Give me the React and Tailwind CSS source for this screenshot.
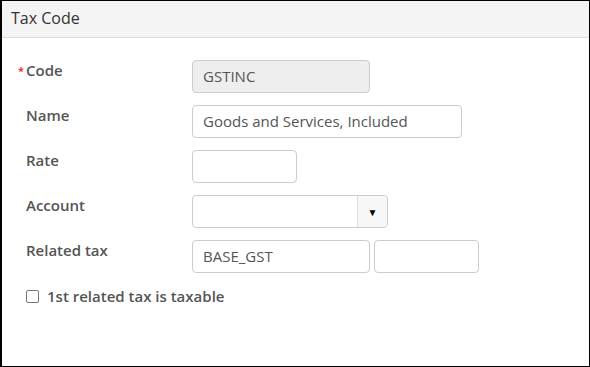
const fields = [
  { label: "Code", required: true },
  { label: "Name" },
  { label: "Rate" },
  { label: "Account" },
  { label: "Related tax" },
];

function TextBox({ value, className = "", disabled }) {
  return (
    <div
      className={`h-[33px] rounded-[4px] border border-[#cccccc] flex items-center px-[10px] text-[15px] text-[#555555] ${
        disabled ? "bg-[#eeeeee]" : "bg-white"
      } ${className}`}
    >
      {value}
    </div>
  );
}

export default function App() {
  return (
    <div
      className="w-[590px] h-[367px] bg-white border border-l-2 border-black flex flex-col"
      style={{ fontFamily: '"Open Sans", sans-serif' }}
    >
      {/* header */}
      <div className="h-[37px] bg-[#f4f4f4] border-b border-[#dddddd] flex items-center pl-[9px] pb-[3px] text-[16px] text-[#333333] shrink-0">
        Tax Code
      </div>

      {/* form */}
      <div className="flex flex-col pt-[22px] pl-[24px]">
        {fields.map((f, i) => (
          <div key={f.label} className="flex h-[45px]">
            <div className="w-[166px] relative text-[15px] leading-[20px] font-semibold text-[#555555]">
              {f.required && (
                <span className="absolute -left-[8px] top-[1px] text-[#ee2222] text-[11px]">*</span>
              )}
              {f.label}
            </div>
            {i === 0 && <TextBox value="GSTINC" disabled className="w-[178px]" />}
            {i === 1 && <TextBox value="Goods and Services, Included" className="w-[270px]" />}
            {i === 2 && <TextBox className="w-[105px]" />}
            {i === 3 && (
              <div className="w-[196px] h-[33px] rounded-[4px] border border-[#cccccc] flex bg-white">
                <div className="flex-1" />
                <div className="w-[30px] border-l border-[#dddddd] bg-[#f7f7f7] rounded-r-[4px] flex items-center justify-center">
                  <span className="text-[10px] text-black leading-none">▼</span>
                </div>
              </div>
            )}
            {i === 4 && (
              <div className="flex gap-[4px]">
                <TextBox value="BASE_GST" className="w-[178px]" />
                <TextBox className="w-[105px]" />
              </div>
            )}
          </div>
        ))}

        <div className="flex items-center mt-[1px] h-[20px]">
          <span className="w-[13px] h-[13px] rounded-[2px] border border-[#767676] bg-white" />
          <span className="ml-[8px] text-[15px] font-semibold text-[#555555]">
            1st related tax is taxable
          </span>
        </div>
      </div>
    </div>
  );
}
